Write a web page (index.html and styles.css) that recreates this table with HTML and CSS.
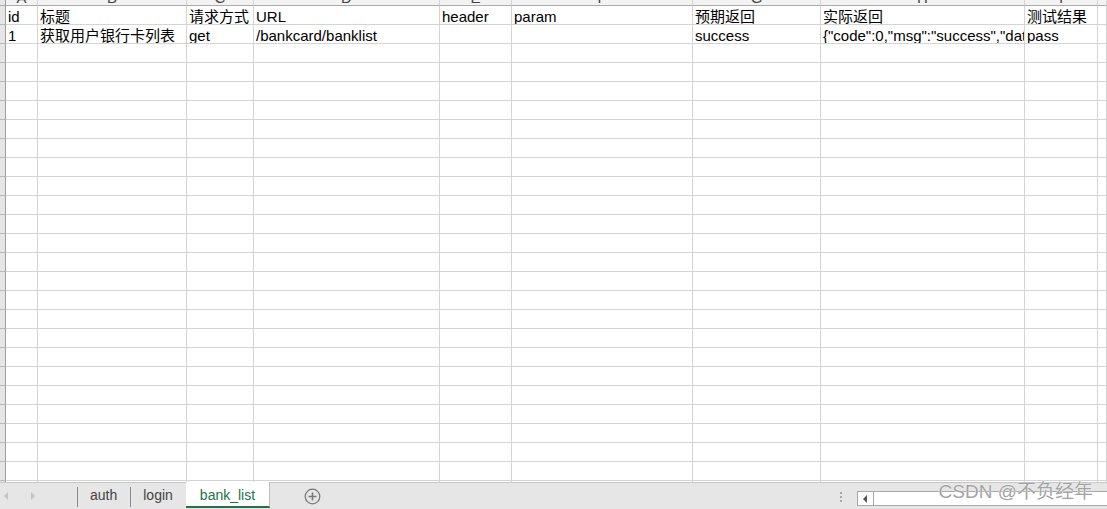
FILE: index.html
```html
<!DOCTYPE html>
<html lang="zh-CN">
<head>
    <meta charset="UTF-8">
    <title>bank_list</title>
    <link rel="stylesheet" href="styles.css">
</head>
<body>
    <div class="sheet-wrap">
        <div class="sheet" id="sheet">
            <div class="corner"></div>
            <div class="col-head"><span>A</span></div>
            <div class="col-head"><span>B</span></div>
            <div class="col-head"><span>C</span></div>
            <div class="col-head"><span>D</span></div>
            <div class="col-head"><span>E</span></div>
            <div class="col-head"><span>F</span></div>
            <div class="col-head"><span>G</span></div>
            <div class="col-head"><span>H</span></div>
            <div class="col-head"><span>I</span></div>
            <div class="col-head"><span></span></div>

            <div class="row-head"></div>
            <div class="cell">id</div>
            <div class="cell">标题</div>
            <div class="cell">请求方式</div>
            <div class="cell">URL</div>
            <div class="cell">header</div>
            <div class="cell">param</div>
            <div class="cell">预期返回</div>
            <div class="cell">实际返回</div>
            <div class="cell">测试结果</div>
            <div class="cell"></div>

            <div class="row-head"></div>
            <div class="cell">1</div>
            <div class="cell">获取用户银行卡列表</div>
            <div class="cell">get</div>
            <div class="cell">/bankcard/banklist</div>
            <div class="cell"></div>
            <div class="cell"></div>
            <div class="cell">success</div>
            <div class="cell">{"code":0,"msg":"success","data":[{"id":1,"bank":"ICBC"}]}</div>
            <div class="cell">pass</div>
            <div class="cell"></div>
        </div>
    </div>

    <div class="tabbar">
        <div class="nav">
            <span class="arrow arrow-left"></span>
            <span class="arrow arrow-right"></span>
        </div>
        <div class="tab">auth</div>
        <div class="tab">login</div>
        <div class="tab active">bank_list</div>
        <div class="add">
            <svg width="17" height="17" viewBox="0 0 17 17">
                <circle cx="8.5" cy="8.5" r="7.3" fill="none" stroke="#7a7a7a" stroke-width="1.3"/>
                <path d="M8.5 4.5v8M4.5 8.5h8" stroke="#7a7a7a" stroke-width="1.6"/>
            </svg>
        </div>
        <div class="dots"><i></i><i></i><i></i></div>
        <div class="hscroll">
            <div class="hscroll-btn">
                <svg width="5" height="8" viewBox="0 0 5 8"><path d="M4 0v8L0 4z" fill="#555"/></svg>
            </div>
            <div class="hscroll-track"></div>
        </div>
        <div class="watermark">CSDN @不负经年</div>
    </div>

    <script>
        const sheet = document.getElementById('sheet');
        for (let r = 0; r < 24; r++) {
            const head = document.createElement('div');
            head.className = 'row-head';
            sheet.appendChild(head);
            for (let c = 0; c < 10; c++) {
                const cell = document.createElement('div');
                cell.className = 'cell';
                sheet.appendChild(cell);
            }
        }
    </script>
</body>
</html>
```

FILE: styles.css
```css
body {
    margin: 0;
    width: 1107px;
    height: 509px;
    overflow: hidden;
    display: flex;
    flex-direction: column;
    background: #fff;
    font-family: 'Liberation Sans', 'Noto Sans CJK SC', sans-serif;
    color: #000;
}
.sheet-wrap {
    height: 482px;
    overflow: hidden;
}
.sheet {
    display: grid;
    grid-template-columns: 6px 32px 149px 67px 186px 72px 181px 128px 204px 73px 1fr;
    grid-template-rows: 6px;
    grid-auto-rows: 19px;
}
.corner,
.col-head {
    background: #f3f3f3;
    border-right: 1px solid #d4d4d4;
    border-bottom: 1px solid #ababab;
    box-sizing: border-box;
    overflow: hidden;
}
.corner {
    background: #e6e6e6;
    border-right-color: #9e9e9e;
}
.col-head span {
    display: block;
    margin-top: -10px;
    text-align: center;
    font-size: 15px;
    line-height: 15px;
    color: #444;
}
.row-head {
    background: #e6e6e6;
    border-right: 1px solid #9e9e9e;
    border-bottom: 1px solid #b8b8b8;
    box-sizing: border-box;
}
.cell {
    border-right: 1px solid #d4d4d4;
    border-bottom: 1px solid #d4d4d4;
    box-sizing: border-box;
    padding: 2px 2px 0;
    font-size: 15px;
    line-height: 18px;
    white-space: nowrap;
    overflow: hidden;
}
.tabbar {
    position: relative;
    flex: 1;
    display: flex;
    align-items: flex-start;
    background: #e6e6e6;
    border-top: 1px solid #c6c6c6;
    font-size: 14px;
    color: #444;
}
.nav {
    width: 77px;
    height: 26px;
    display: flex;
    align-items: center;
    gap: 23px;
    padding-left: 4px;
    box-sizing: border-box;
}
.arrow {
    width: 0;
    height: 0;
    border-top: 4px solid transparent;
    border-bottom: 4px solid transparent;
}
.arrow-left {
    border-right: 4px solid #c4c4c4;
}
.arrow-right {
    border-left: 4px solid #c4c4c4;
}
.tab {
    margin-top: 4px;
    height: 20px;
    line-height: 17px;
    padding: 0 13px 0 12px;
    border-left: 1px solid #8c8c8c;
}
.tab.active {
    margin-top: -1px;
    height: 24px;
    line-height: 27px;
    padding: 0 14px;
    background: #fff;
    border-left: none;
    border-right: 1px solid #bdbdbd;
    border-bottom: 2px solid #217346;
    color: #217346;
}
.add {
    margin: 5px 0 0 34px;
    height: 17px;
}
.dots {
    margin: 9px 0 0 auto;
    width: 3px;
    display: flex;
    flex-direction: column;
    gap: 2px;
}
.dots i {
    display: block;
    width: 2px;
    height: 2px;
    background: #a8a8a8;
}
.hscroll {
    margin: 8px 0 0 14px;
    width: 250px;
    height: 15px;
    display: flex;
    border: 1px solid #a9a9a9;
    border-right: none;
    box-sizing: border-box;
    background: #fff;
}
.hscroll-btn {
    width: 15px;
    display: flex;
    align-items: center;
    justify-content: center;
    border-right: 1px solid #a9a9a9;
}
.hscroll-track {
    flex: 1;
}
.watermark {
    position: absolute;
    right: 14px;
    top: -7px;
    font-size: 19px;
    color: #a3a3a3;
    text-shadow: 0 0 1px #fff, 0 0 1px #fff;
    white-space: nowrap;
}
```
